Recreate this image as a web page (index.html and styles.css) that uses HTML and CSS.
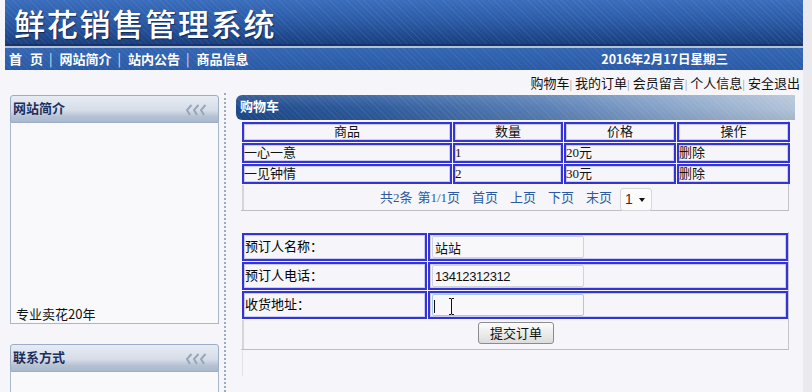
FILE: index.html
```html
<!DOCTYPE html>
<html lang="zh-CN">
<head>
  <meta charset="UTF-8">
  <title>鲜花销售管理系统 - 购物车</title>
  <link rel="stylesheet" href="styles.css">
</head>
<body>
  <div class="banner">
    <h1>鲜花销售管理系统</h1>
  </div>
  <div class="navbar">
    <div class="menu">
      <a class="first">首 页</a><i>|</i><a>网站简介</a><i>|</i><a>站内公告</a><i>|</i><a>商品信息</a>
    </div>
    <div class="date">2016年2月17日星期三</div>
  </div>
  <div class="toplinks">
    <a>购物车</a><i>|</i> <a>我的订单</a><i>|</i> <a>会员留言</a><i>|</i> <a>个人信息</a><i>|</i> <a>安全退出</a>
  </div>

  <div class="main">
    <div class="side">
      <div class="sidebox">
        <div class="sidehead">网站简介
          <svg class="fold" width="24" height="12" viewBox="0 0 24 12"><path d="M7.5 1 3 6l3 5M14.5 1 10 6l3 5M21.5 1 17 6l3 5" fill="none" stroke="#98a6ba" stroke-width="2"/></svg>
        </div>
        <div class="sidebody intro">
          <p>专业卖花20年</p>
        </div>
      </div>
      <div class="sidebox">
        <div class="sidehead">联系方式
          <svg class="fold" width="24" height="12" viewBox="0 0 24 12"><path d="M7.5 1 3 6l3 5M14.5 1 10 6l3 5M21.5 1 17 6l3 5" fill="none" stroke="#98a6ba" stroke-width="2"/></svg>
        </div>
        <div class="sidebody contact"></div>
      </div>
    </div>
    <div class="divider"></div>
    <div class="content">
      <div class="cart-title">购物车</div>
      <div class="cart-box">
        <table class="grid cart">
          <colgroup><col class="c1"><col class="c2"><col class="c3"><col class="c4"></colgroup>
          <tr class="head"><td>商品</td><td>数量</td><td>价格</td><td>操作</td></tr>
          <tr><td>一心一意</td><td>1</td><td>20元</td><td>删除</td></tr>
          <tr><td>一见钟情</td><td>2</td><td>30元</td><td>删除</td></tr>
        </table>
        <div class="pager">
          <span>共2条</span><span class="pg">第1/1页</span><a>首页</a><a>上页</a><a>下页</a><a>末页</a><span class="select">1<b></b></span>
        </div>
      </div>

      <div class="order-box">
        <table class="grid order">
          <colgroup><col class="o1"><col class="o2"></colgroup>
          <tr><td class="label">预订人名称：</td><td><span class="field"><input type="text" value="站站"></span></td></tr>
          <tr><td class="label">预订人电话：</td><td><span class="field"><input class="num" type="text" value="13412312312"></span></td></tr>
          <tr><td class="label">收货地址：</td><td><span class="field"><input class="focus" type="text" value=""><span class="caret"></span><svg class="ibeam" width="7" height="17" viewBox="0 0 7 17"><path d="M1 .5h2l.5.6.5-.6h2M3.5 1v15M1 16.5h2l.5-.6.5.6h2" fill="none" stroke="#111" stroke-width="1"/></svg></span></td></tr>
        </table>
        <div class="submit-row"><button type="button">提交订单</button></div>
      </div>
      <div class="ghost"></div>
    </div>
  </div>
</body>
</html>
```

FILE: styles.css
```css
* {
  margin: 0;
  padding: 0;
  box-sizing: border-box;
}
html {
  background: #e9e9ee;
}
body {
  width: 803px;
  height: 100vh;
  overflow: hidden;
  background: #f6f6fa;
  color: #111;
  font: 13px/1.3 "Liberation Serif", "Noto Sans CJK SC", serif;
}
a {
  cursor: pointer;
}
i {
  font-style: normal;
}

/* header */
.banner {
  margin-left: 5px;
  height: 46px;
  padding-left: 9px;
  border-bottom: 2px solid #15346e;
  background:
    repeating-linear-gradient(45deg, rgba(255, 255, 255, 0.06) 0 1px, transparent 1px 4px),
    linear-gradient(#3a6dbc, #2c5ca8 45%, #204a8e 80%, #1a3f7e);
}
.banner h1 {
  font: 500 31px/45px "Noto Sans CJK SC", sans-serif;
  letter-spacing: 1.8px;
  color: #fff;
  text-shadow: 1px 1px 1px rgba(0, 10, 40, 0.55);
}
.navbar {
  display: flex;
  align-items: center;
  margin-left: 5px;
  height: 24px;
  padding-left: 4px;
  border-top: 2px solid #b6c1d2;
  background:
    repeating-linear-gradient(45deg, rgba(255, 255, 255, 0.05) 0 1px, transparent 1px 4px),
    linear-gradient(#3466b3, #2b5ba6);
  color: #fff;
  font: bold 13px/22px "Noto Sans CJK SC", sans-serif;
}
.menu .first {
  word-spacing: 5px;
}
.menu i {
  margin: 0 7px 0 6px;
  font-weight: normal;
  color: #d8e2f2;
}
.date {
  margin-left: auto;
  margin-right: 75px;
  font-size: 12.5px;
}
.toplinks {
  height: 23px;
  padding: 3px 3px 0 0;
  text-align: right;
  font: 13px/19px "Noto Sans CJK SC", sans-serif;
  color: #111;
}
.toplinks i {
  color: #9a9a9a;
  font-size: 10px;
}

/* layout */
.main {
  display: flex;
  padding-left: 10px;
  height: 299px;
}
.side {
  width: 209px;
  padding-top: 2px;
}
.divider {
  width: 2px;
  margin-left: 5px;
  border-left: 2px dotted #9aa9c4;
}
.content {
  width: 559px;
  margin-left: 10px;
  padding-top: 2px;
}

/* side boxes */
.sidebox + .sidebox {
  margin-top: 20px;
}
.sidehead {
  display: flex;
  align-items: center;
  justify-content: space-between;
  height: 28px;
  padding: 0 10px 3px 2px;
  border: 1px solid #9cadc6;
  border-radius: 3px 3px 0 0;
  background: linear-gradient(#e7ecf3, #d6dde8 55%, #b6c2d4 78%, #abb9cd);
  color: #1b2f5e;
  font: bold 13px/22px "Noto Sans CJK SC", sans-serif;
}
.fold {
  margin-top: 4px;
}
.sidebody {
  border: 1px solid #a9b7cb;
  border-top: 0;
  background: #f9f9fc;
  font: 13px/16px "Noto Sans CJK SC", sans-serif;
}
.sidebody.intro {
  display: flex;
  flex-direction: column;
  justify-content: flex-end;
  height: 201px;
  padding: 0 0 1px 5px;
}
.sidebody.contact {
  height: 20px;
  border-bottom: 0;
}

/* cart */
.cart-title {
  height: 25px;
  padding-left: 4px;
  border-radius: 6px 0 0 6px;
  background:
    repeating-linear-gradient(45deg, rgba(255, 255, 255, 0.06) 0 1px, transparent 1px 4px),
    linear-gradient(rgba(255, 255, 255, 0.12), transparent 50%, rgba(0, 0, 0, 0.08)),
    linear-gradient(to right, #1f4a8b, #2f5c9e 25%, #5a80b6 55%, #8ea9cc 80%, #b3c4d9);
  color: #fff;
  font: bold 13px/22px "Noto Sans CJK SC", sans-serif;
}
.cart-box,
.order-box {
  width: 548px;
  margin-left: 5px;
  border-right: 1px solid #c4c4c9;
  border-bottom: 1px solid #bdbdc2;
}
.order-box {
  margin-top: 21px;
}
.grid {
  width: 547px;
  table-layout: fixed;
  border-collapse: separate;
  border-spacing: 1px;
}
.cart {
  margin-top: 1px;
}
.grid td {
  border: 2px solid #3434d4;
  box-shadow: inset 0 0 0 1px rgba(150, 150, 245, 0.45);
  padding: 0;
  white-space: nowrap;
}
.cart td {
  height: 20px;
  line-height: 16px;
}
.cart .head td {
  text-align: center;
}
.c1 { width: 210px; }
.c2 { width: 110px; }
.c3 { width: 112px; }
.c4 { width: 113px; }
.o1 { width: 185px; }
.o2 { width: 360px; }

.pager {
  height: 25px;
  margin-left: 1px;
  padding-top: 1px;
  border-left: 2px solid #d4d4d9;
  text-align: center;
  color: #2c5a9e;
  line-height: 23px;
}
.pager .pg {
  margin-left: 5px;
}
.pager a {
  margin-left: 12px;
}
.select {
  display: inline-block;
  position: relative;
  vertical-align: middle;
  width: 32px;
  height: 23px;
  margin-left: 8px;
  padding-left: 4px;
  border: 1px solid #d6d6db;
  border-radius: 3px;
  background: #fbfbfc;
  text-align: left;
  color: #5b1b1b;
  font: 14px/20px "Liberation Sans", sans-serif;
}
.select b {
  position: absolute;
  right: 6px;
  top: 9px;
  border-top: 4px solid #111;
  border-left: 3.5px solid transparent;
  border-right: 3.5px solid transparent;
}

/* order form */
.order td {
  height: 28px;
}
.order .label {
  padding-left: 1px;
  color: #000;
}
.field {
  position: relative;
  display: block;
  margin-left: 2px;
  width: 152px;
}
.field input {
  display: block;
  width: 152px;
  height: 22px;
  padding: 0 2px;
  border: 1px solid #d0d3d9;
  border-radius: 2px;
  background: #f8f8fa;
  color: #111;
  font: 13px "Noto Sans CJK SC", sans-serif;
  outline: none;
}
.field input.num {
  font-family: "Liberation Sans", sans-serif;
  letter-spacing: -0.4px;
}
.field input.focus {
  border-color: #a9c9e8;
}
.caret {
  position: absolute;
  left: 2px;
  top: 6px;
  width: 1px;
  height: 13px;
  background: #111;
}
.ibeam {
  position: absolute;
  left: 16px;
  top: 4px;
}
.submit-row {
  height: 29px;
  margin-left: 1px;
  padding-top: 2px;
  border-left: 2px solid #d4d4d9;
  text-align: center;
}
.submit-row button {
  width: 76px;
  height: 22px;
  border: 1px solid #8c8c8c;
  border-radius: 3px;
  background: linear-gradient(#fcfcfc, #ececec 50%, #dcdcdc);
  color: #111;
  font: 13px/20px "Noto Sans CJK SC", sans-serif;
}
.ghost {
  height: 25px;
  margin: 1px 0 0 6px;
  border-left: 1px solid #e0e0e5;
}
```
